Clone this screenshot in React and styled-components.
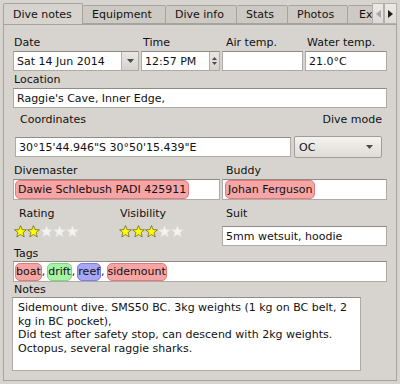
import React from 'react';
import styled, { createGlobalStyle } from 'styled-components';


const GlobalStyle = createGlobalStyle`
    html, body {
        background: #d7d4cf;
        margin: 0;
        padding: 0;
    }

    body {
        color: #111;
        font-family: 'DejaVu Sans', 'Liberation Sans', sans-serif;
        font-size: 11px;
    }
`;

const Root = styled.div`
    box-sizing: border-box;
    height: 384px;
    padding: 3px;
    width: 400px;
`;

const TabBar = styled.div`
    display: flex;
    height: 21px;
`;

const TabStrip = styled.div`
    align-items: flex-end;
    display: flex;
    flex: 1;
    overflow: hidden;
`;

const Tab = styled.div`
    background: ${p => (p.$active ? '#d7d4cf' : '#cdcac4')};
    border: 1px solid #a6a39e;
    border-bottom: ${p => (p.$active ? 'none' : '1px solid #a6a39e')};
    border-left: ${p => (p.$first || p.$active ? '1px solid #a6a39e' : 'none')};
    border-radius: 2px 2px 0 0;
    box-sizing: border-box;
    flex: none;
    height: ${p => (p.$active ? '22px' : '19px')};
    line-height: ${p => (p.$active ? '21px' : '18px')};
    margin-bottom: ${p => (p.$active ? '-1px' : '0')};
    padding-left: ${p => p.$pad || 9}px;
    position: relative;
    white-space: nowrap;
    width: ${p => p.$w}px;
    z-index: ${p => (p.$active ? 1 : 0)};
`;

const ScrollButton = styled.div`
    align-items: center;
    background: linear-gradient(#eceae7, #dddad6);
    border: 1px solid #b3b0ab;
    box-sizing: border-box;
    display: flex;
    flex: none;
    height: 21px;
    justify-content: center;
    width: ${p => p.$w}px;
`;

const Panel = styled.div`
    background: #d7d4cf;
    border: 1px solid #a6a39e;
    box-sizing: border-box;
    height: 357px;
    padding: 10px 9px 0;
`;

const Row = styled.div`
    align-items: ${p => p.$align || 'flex-start'};
    display: flex;
    gap: ${p => (p.$gap ?? 2)}px;
    margin-top: ${p => p.$mt || 0}px;
    padding: 0 ${p => p.$pr || 0}px 0 ${p => p.$pl || 0}px;
`;

const Field = styled.div`
    display: flex;
    flex: none;
    flex-direction: column;
    width: ${p => p.$w}px;
`;

const Label = styled.div`
    flex: ${p => (p.$grow ? 1 : 'none')};
    height: ${p => p.$h || 16}px;
    line-height: ${p => p.$h || 16}px;
    margin-bottom: ${p => p.$mb || 0}px;
    padding-left: ${p => p.$indent || 1}px;
    text-align: ${p => (p.$right ? 'right' : 'left')};
    white-space: nowrap;
`;

const LineEdit = styled.div`
    align-items: center;
    background: #fff;
    border: 1px solid #aeaba6;
    border-top-color: #8f8c88;
    box-sizing: border-box;
    display: flex;
    height: ${p => p.$h || 20}px;
    padding: 0 ${p => (p.$pad ?? 3)}px;
    white-space: nowrap;
    width: ${p => (p.$w ? `${p.$w}px` : '100%')};
`;

const ComboText = styled.div`
    flex: 1;
    padding-left: 3px;
`;

const ComboButton = styled.div`
    align-items: center;
    align-self: stretch;
    background: linear-gradient(#e9e7e4, #d6d3cf);
    border-left: 1px solid #b3b0ab;
    display: flex;
    justify-content: center;
    width: 16px;
`;

const SpinButtons = styled.div`
    align-items: center;
    align-self: stretch;
    background: linear-gradient(#e9e7e4, #d6d3cf);
    border-left: 1px solid #b3b0ab;
    display: flex;
    flex-direction: column;
    gap: 2px;
    justify-content: center;
    width: 9px;
`;

const PushCombo = styled.div`
    align-items: center;
    background: linear-gradient(#f4f3f1, #dedbd7);
    border: 1px solid #a19e99;
    border-radius: 2px;
    box-sizing: border-box;
    display: flex;
    height: 22px;
    justify-content: space-between;
    padding: 0 8px 0 4px;
    width: ${p => p.$w}px;
`;

const Chip = styled.span`
    align-items: center;
    background: ${p => p.$bg};
    border: 1px solid ${p => p.$border};
    border-radius: 5px;
    box-sizing: border-box;
    display: inline-flex;
    height: ${p => p.$h || 18}px;
    padding: 0 ${p => (p.$pad ?? 0)}px;
`;

const Comma = styled.span`
    margin-right: 2px;
`;

const Stars = styled.div`
    display: flex;
    height: 13px;
    margin-top: 3px;
    padding-left: ${p => p.$pl || 0}px;
`;

const Notes = styled.div`
    background: #fff;
    border: 1px solid #aeaba6;
    border-top-color: #8f8c88;
    box-sizing: border-box;
    height: 74px;
    line-height: 13.5px;
    margin-left: -1px;
    padding: 3px 5px;
    width: 349px;
`;

const Column = styled.div`
    display: flex;
    flex: none;
    flex-direction: column;
    width: ${p => p.$w}px;
`;


const TABS = [
    { label: 'Dive notes', width: 80 },
    { label: 'Equipment', width: 83 },
    { label: 'Dive info', width: 71 },
    { label: 'Stats', width: 51 },
    { label: 'Photos', width: 60 },
    { label: 'Extra info', pad: 11, width: 80 }
];

const TAG_COLOURS = {
    blue: [ '#a7a7f5', '#7c7ce3' ],
    green: [ '#a8f2a8', '#7cd87c' ],
    pink: [ '#f5a5a5', '#e27a7a' ]
};

const TAGS = [
    { colour: 'pink', text: 'boat' },
    { colour: 'green', text: 'drift' },
    { colour: 'blue', text: 'reef' },
    { colour: 'pink', text: 'sidemount' }
];


/**
 * Small down-pointing triangle used by combo boxes.
 *
 * @returns {ReactElement}
 */
function DownArrow() {
    return (
        <svg height = '4' viewBox = '0 0 7 4' width = '7'>
            <path d = 'M0 0 H7 L3.5 4 Z' fill = '#4a4a4a' />
        </svg>
    );
}

/**
 * Single rating star.
 *
 * @returns {ReactElement}
 */
function Star({ filled }) {
    return (
        <svg height = '13' viewBox = '0 0 13 13' width = '13'>
            <polygon
                fill = { filled ? '#ffff00' : '#f3f3f1' }
                points = '6.5,0.6 8.1,4.6 12.4,4.8 9.1,7.5 10.2,11.9 6.5,9.5 2.8,11.9 3.9,7.5 0.6,4.8 4.9,4.6'
                stroke = { filled ? '#6e6a2a' : '#e2e1de' }
                strokeLinejoin = 'round'
                strokeWidth = '0.8' />
        </svg>
    );
}

/**
 * Row of five stars.
 *
 * @returns {ReactElement}
 */
function StarRating({ value, pl }) {
    return (
        <Stars $pl = { pl }>
            { [ 0, 1, 2, 3, 4 ].map(i => <Star filled = { i < value } key = { i } />) }
        </Stars>
    );
}

/**
 * Dive notes tab of the dive log.
 *
 * @returns {ReactElement}
 */
export default function App() {
    return (
        <Root>
            <GlobalStyle />
            <TabBar>
                <TabStrip>
                    { TABS.map((tab, i) => (
                        <Tab
                            $active = { i === 0 }
                            $first = { i === 0 }
                            $pad = { tab.pad }
                            $w = { tab.width }
                            key = { tab.label }>
                            { tab.label }
                        </Tab>
                    )) }
                </TabStrip>
                <ScrollButton $w = { 12 }>
                    <svg height = '8' viewBox = '0 0 5 8' width = '5'>
                        <path d = 'M5 0 V8 L0 4 Z' fill = '#a9a7a3' />
                    </svg>
                </ScrollButton>
                <ScrollButton $w = { 13 }>
                    <svg height = '8' viewBox = '0 0 5 8' width = '5'>
                        <path d = 'M0 0 V8 L5 4 Z' fill = '#1e1e1e' />
                    </svg>
                </ScrollButton>
            </TabBar>
            <Panel>
                <Row>
                    <Field $w = { 126 }>
                        <Label>Date</Label>
                        <LineEdit $pad = { 0 }>
                            <ComboText>Sat 14 Jun 2014</ComboText>
                            <ComboButton><DownArrow /></ComboButton>
                        </LineEdit>
                    </Field>
                    <Field $w = { 79 }>
                        <Label $indent = { 2 }>Time</Label>
                        <LineEdit $pad = { 0 }>
                            <ComboText>12:57 PM</ComboText>
                            <SpinButtons>
                                <svg height = '3' viewBox = '0 0 5 3' width = '5'>
                                    <path d = 'M0 3 H5 L2.5 0 Z' fill = '#4a4a4a' />
                                </svg>
                                <svg height = '3' viewBox = '0 0 5 3' width = '5'>
                                    <path d = 'M0 0 H5 L2.5 3 Z' fill = '#4a4a4a' />
                                </svg>
                            </SpinButtons>
                        </LineEdit>
                    </Field>
                    <Field $w = { 81 }>
                        <Label $indent = { 4 }>Air temp.</Label>
                        <LineEdit />
                    </Field>
                    <Field $w = { 82 }>
                        <Label $indent = { 2 }>Water temp.</Label>
                        <LineEdit>21.0°C</LineEdit>
                    </Field>
                </Row>

                <Row $mt = { 1 }>
                    <Field $w = { 374 }>
                        <Label>Location</Label>
                        <LineEdit>Raggie's Cave, Inner Edge,</LineEdit>
                    </Field>
                </Row>

                <Row $mt = { 4 } $pl = { 6 } $pr = { 5 }>
                    <Label $grow>Coordinates</Label>
                    <Label $right>Dive mode</Label>
                </Row>
                <Row $align = 'center' $gap = { 3 } $mt = { 8 } $pl = { 2 }>
                    <LineEdit $w = { 276 }>30°15'44.946"S 30°50'15.439"E</LineEdit>
                    <PushCombo $w = { 88 }>
                        <span>OC</span>
                        <DownArrow />
                    </PushCombo>
                </Row>

                <Row $mt = { 5 }>
                    <Field $w = { 207 }>
                        <Label>Divemaster</Label>
                        <LineEdit $h = { 21 } $pad = { 1 }>
                            <Chip
                                $bg = { TAG_COLOURS.pink[0] }
                                $border = { TAG_COLOURS.pink[1] }
                                $h = { 19 }
                                $pad = { 2 }>
                                Dawie Schlebush PADI 425911
                            </Chip>
                        </LineEdit>
                    </Field>
                    <Field $w = { 165 }>
                        <Label $indent = { 4 }>Buddy</Label>
                        <LineEdit $h = { 21 } $pad = { 2 }>
                            <Chip
                                $bg = { TAG_COLOURS.pink[0] }
                                $border = { TAG_COLOURS.pink[1] }
                                $h = { 19 }
                                $pad = { 2 }>
                                Johan Ferguson
                            </Chip>
                        </LineEdit>
                    </Field>
                </Row>

                <Row $gap = { 0 } $mt = { 6 }>
                    <Column $w = { 106 }>
                        <Label $indent = { 6 }>Rating</Label>
                        <StarRating pl = { 1 } value = { 2 } />
                    </Column>
                    <Column $w = { 103 }>
                        <Label>Visibility</Label>
                        <StarRating value = { 3 } />
                    </Column>
                    <Field $w = { 165 }>
                        <Label $indent = { 4 } $mb = { 4 }>Suit</Label>
                        <LineEdit>5mm wetsuit, hoodie</LineEdit>
                    </Field>
                </Row>

                <Row>
                    <Field $w = { 374 }>
                        <Label $h = { 15 }>Tags</Label>
                        <LineEdit $h = { 21 } $pad = { 1 }>
                            { TAGS.map((tag, i) => (
                                <React.Fragment key = { tag.text }>
                                    <Chip
                                        $bg = { TAG_COLOURS[tag.colour][0] }
                                        $border = { TAG_COLOURS[tag.colour][1] }>
                                        { tag.text }
                                    </Chip>
                                    { i < TAGS.length - 1 && <Comma>,</Comma> }
                                </React.Fragment>
                            )) }
                        </LineEdit>
                    </Field>
                </Row>

                <Row $mt = { 1 }>
                    <Field $w = { 374 }>
                        <Label $h = { 14 }>Notes</Label>
                        <Notes>
                            Sidemount dive. SMS50 BC. 3kg weights (1 kg on BC belt, 2 kg in BC pocket),
                            <br />
                            Did test after safety stop, can descend with 2kg weights.
                            <br />
                            Octopus, several raggie sharks.
                        </Notes>
                    </Field>
                </Row>
            </Panel>
        </Root>
    );
}
